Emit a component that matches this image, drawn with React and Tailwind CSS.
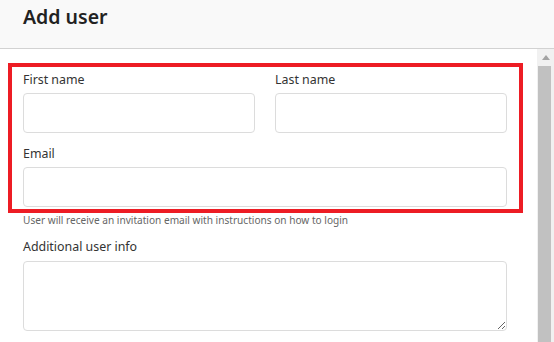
export default function App() {
  const label = 'block text-[12.4px] leading-[18px] text-[#333] mb-[4px]';
  const input =
    'block w-full h-[40px] rounded-[4px] border border-[#dcdcdc] bg-white outline-none';

  return (
    <div className="w-[554px] h-[342px] overflow-hidden bg-white flex flex-col font-['Noto_Sans','Open_Sans',sans-serif]">
      <header className="h-[49px] shrink-0 bg-[#f9f9f9] border-b border-[#d2d2d2] px-[23px] pt-[3px]">
        <h1 className="text-[19.5px] leading-[28px] font-semibold text-[#222]">Add user</h1>
      </header>

      <div className="flex flex-1 min-h-0">
        <main className="flex-1 pl-[23px] pr-[30px] pt-[22px]">
          <div className="relative">
            {/* highlight box */}
            <div className="absolute left-[-15px] right-[-16px] top-[-8px] bottom-[-6px] border-[4px] border-[#ed1c24] pointer-events-none"></div>

            <div className="grid grid-cols-2 gap-x-[20px]">
              <div>
                <label className={label}>First name</label>
                <input className={input} />
              </div>
              <div>
                <label className={label}>Last name</label>
                <input className={input} />
              </div>
            </div>

            <div className="mt-[12px]">
              <label className={label}>Email</label>
              <input className={input} />
            </div>
          </div>

          <p className="mt-[6px] text-[10.1px] leading-[15px] text-[#666]">
            User will receive an invitation email with instructions on how to login
          </p>

          <div className="mt-[10px]">
            <label className="block text-[12.4px] leading-[18px] text-[#333] mb-[5px]">Additional user info</label>
            <textarea className="block w-full h-[70px] rounded-[4px] border border-[#dcdcdc] bg-white outline-none resize-y"></textarea>
          </div>
        </main>

        <div className="w-[17px] shrink-0 bg-[#f1f1f1] flex flex-col">
          <div className="h-[17px] flex items-center justify-center">
            <svg width="8" height="5" viewBox="0 0 8 5">
              <path d="M0 5 L4 0 L8 5 Z" fill="#a3a3a3" />
            </svg>
          </div>
          <div className="flex-1 ml-[1px] mr-[3px] bg-[#c1c1c1]"></div>
        </div>
      </div>
    </div>
  );
}
